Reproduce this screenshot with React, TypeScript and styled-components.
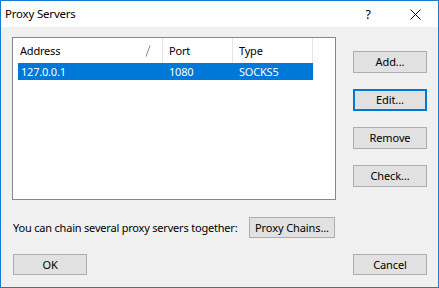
import React from "react";
import styled, { createGlobalStyle } from "styled-components";

const Global = createGlobalStyle`
  html, body { margin: 0; padding: 0; background: #f0f0f0; }
  body { font-family: "Noto Sans", "Open Sans", sans-serif; font-size: 11px; letter-spacing: -0.2px; color: #000; }
  * { box-sizing: border-box; }
`;

const Window = styled.div`
  width: 439px;
  height: 288px;
  border: 1px solid #1a7bd6;
  background: #f0f0f0;
  display: flex;
  flex-direction: column;
  overflow: hidden;
`;

const TitleBar = styled.div`
  height: 26px;
  background: #ffffff;
  display: flex;
  align-items: center;
  padding-left: 4px;
  flex-shrink: 0;
`;

const Title = styled.div`
  flex: 1;
  font-size: 11.5px;
  line-height: 16px;
  margin-top: -1px;
`;

const Help = styled.div`
  width: 44px;
  text-align: center;
  font-size: 12.5px;
  margin-right: 2px;
`;

const Close = styled.div`
  width: 46px;
  height: 26px;
  display: flex;
  align-items: center;
  justify-content: center;
`;

const Body = styled.div`
  flex: 1;
  padding: 10px 11px 0 11px;
  display: flex;
  flex-direction: column;
`;

const TopRow = styled.div`
  display: flex;
  align-items: flex-start;
`;

const ListBox = styled.div`
  width: 324px;
  height: 163px;
  background: #fff;
  border: 1px solid #828790;
  padding-left: 5px;
`;

const Header = styled.div`
  display: flex;
  height: 25px;
`;

const HeadCell = styled.div<{ $w: number; $pad: number }>`
  position: relative;
  width: ${(p) => p.$w}px;
  padding-left: ${(p) => p.$pad}px;
  border-right: 1px solid #e5e5e5;
  display: flex;
  align-items: center;
  line-height: 16px;
`;

const SortMark = styled.svg`
  position: absolute;
  right: 11px;
  top: 7px;
`;

const Row = styled.div<{ $selected?: boolean }>`
  display: flex;
  height: 17px;
  background: ${(p) => (p.$selected ? "#0078d7" : "transparent")};
  color: ${(p) => (p.$selected ? "#fff" : "#000")};
  width: 295px;
`;

const Cell = styled.div<{ $w: number; $pad: number }>`
  width: ${(p) => p.$w}px;
  padding-left: ${(p) => p.$pad}px;
  line-height: 17px;
  white-space: nowrap;
`;

const SideButtons = styled.div`
  display: flex;
  flex-direction: column;
  gap: 16px;
  margin-left: 17px;
  margin-top: 14px;
`;

const Button = styled.button<{ $w?: number; $h?: number; $default?: boolean }>`
  width: ${(p) => p.$w ?? 74}px;
  height: ${(p) => p.$h ?? 22}px;
  background: #e1e1e1;
  border: 1px solid ${(p) => (p.$default ? "#0078d7" : "#adadad")};
  box-shadow: ${(p) => (p.$default ? "inset 0 0 0 1px #0078d7" : "none")};
  font-family: inherit;
  font-size: 11px;
  letter-spacing: -0.1px;
  color: #000;
  padding: 0;
  margin: 0;
  line-height: 16px;
  white-space: nowrap;
`;

const ChainRow = styled.div`
  display: flex;
  align-items: center;
  margin-top: 17px;
  padding-left: 1px;
`;

const ChainLabel = styled.div`
  width: 236px;
  line-height: 16px;
  white-space: nowrap;
`;

const BottomRow = styled.div`
  display: flex;
  justify-content: space-between;
  margin-top: 16px;
  padding-left: 1px;
`;

export default function App() {
  return (
    <>
      <Global />
      <Window>
        <TitleBar>
          <Title>Proxy Servers</Title>
          <Help>?</Help>
          <Close>
            <svg width="11" height="11" viewBox="0 0 11 11">
              <path d="M0.5 0.5 L10.5 10.5 M10.5 0.5 L0.5 10.5" stroke="#000" strokeWidth="1" fill="none" />
            </svg>
          </Close>
        </TitleBar>
        <Body>
          <TopRow>
            <ListBox>
              <Header>
                <HeadCell $w={145} $pad={2}>
                  Address
                  <SortMark width="6" height="12" viewBox="0 0 6 12">
                    <path d="M5 0.5 L1 11.5" stroke="#8a8a8a" strokeWidth="1" fill="none" />
                  </SortMark>
                </HeadCell>
                <HeadCell $w={70} $pad={6}>Port</HeadCell>
                <HeadCell $w={80} $pad={6}>Type</HeadCell>
              </Header>
              <Row $selected>
                <Cell $w={145} $pad={3}>127.0.0.1</Cell>
                <Cell $w={70} $pad={6}>1080</Cell>
                <Cell $w={80} $pad={6}>SOCKS5</Cell>
              </Row>
            </ListBox>
            <SideButtons>
              <Button>Add...</Button>
              <Button $default>Edit...</Button>
              <Button>Remove</Button>
              <Button>Check...</Button>
            </SideButtons>
          </TopRow>
          <ChainRow>
            <ChainLabel>You can chain several proxy servers together:</ChainLabel>
            <Button $w={86} $h={21}>Proxy Chains...</Button>
          </ChainRow>
          <BottomRow>
            <Button $w={74} $h={21}>OK</Button>
            <Button $w={74} $h={21}>Cancel</Button>
          </BottomRow>
        </Body>
      </Window>
    </>
  );
}
